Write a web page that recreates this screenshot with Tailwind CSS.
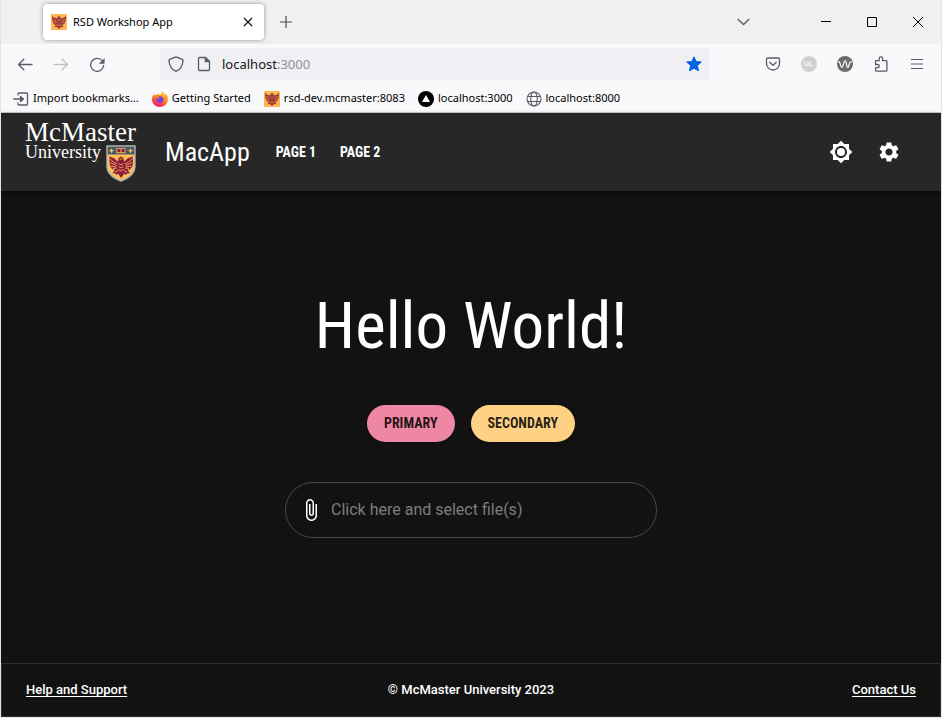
<!DOCTYPE html>
<html lang="en">
<head>
<meta charset="utf-8">
<meta name="viewport" content="width=device-width, initial-scale=1">
<title>RSD Workshop App</title>
<script src="https://cdn.jsdelivr.net/npm/@tailwindcss/browser@4"></script>
</head>
<body class="flex min-h-screen flex-col border-x border-b border-[#e4e4e6] bg-[#121212] font-['Noto_Sans',sans-serif] text-black">
<svg class="hidden" aria-hidden="true">
  <symbol id="eagle" viewBox="0 0 16 16">
    <path fill="#fdb94e" d="M0 0h16v16H0z"/>
    <path fill="#a03a3c" d="M1 2l2.500 1.800L6 4.500l.8-1.800 1.200-.7 1.200.7.800 1.800 2.500-.7L15 2l-.3 4.500-1.200 3.200-2 1.300 1 2.300-2.300-.3L8 15l-2.200-2-2.300.3 1-2.300-2-1.300L1.300 6.500z"/>
    <path stroke="#fdb94e" stroke-width=".5" fill="none" d="M2 5.500l3.200 1.700M2.500 8.200l2.900.6M14 5.500l-3.200 1.700M13.500 8.200l-2.900.6M6.700 5.500l1.300 1 1.300-1M6.200 10.500L8 12l1.800-1.500M4.800 11.500l1.500-.7M11.200 11.500l-1.500-.7"/>
  </symbol>
</svg>

<!-- Tab strip -->
<div class="flex h-11 shrink-0 items-center bg-[#f0f0f0] pl-[42px]">
  <div class="flex h-9 w-[221px] items-center rounded bg-white pl-2 pr-2 shadow-[0_0_4px_rgba(0,0,0,0.4)]">
    <svg class="size-4" aria-hidden="true"><use href="#eagle"/></svg>
    <span class="ml-1.5 flex-1 whitespace-nowrap text-[11px]">RSD Workshop App</span>
    <button class="flex size-4 items-center justify-center" aria-label="Close tab"><svg class="size-[10px]" viewBox="0 0 10 10" fill="none" stroke="#15141a" stroke-width="1.200"><path d="M1 1l8 8M9 1L1 9"/></svg></button>
  </div>
  <button class="ml-4 flex size-3" aria-label="New tab"><svg class="size-3" viewBox="0 0 12 12" fill="none" stroke="#4a4953" stroke-width="1.200"><path d="M6 0v12M0 6h12"/></svg></button>
  <div class="ml-auto flex items-center">
    <button class="mr-[71px]" aria-label="List all tabs"><svg class="h-2 w-[13px]" viewBox="0 0 13 8" fill="none" stroke="#5b5b66" stroke-width="1.400"><path d="M.7 1l5.800 5.600L12.300 1"/></svg></button>
    <button class="mr-9" aria-label="Minimize"><svg class="size-[10px]" viewBox="0 0 10 10" stroke="#000"><path d="M0 4.500h10"/></svg></button>
    <button class="mr-9" aria-label="Maximize"><svg class="size-[10px]" viewBox="0 0 10 10" fill="none" stroke="#000"><path d="M.5.5h9v9h-9z"/></svg></button>
    <button class="mr-[18px]" aria-label="Close"><svg class="size-[10px]" viewBox="0 0 10 10" stroke="#000"><path d="M0 0l10 10M10 0L0 10"/></svg></button>
  </div>
</div>

<!-- Navigation toolbar -->
<div class="flex h-10 shrink-0 items-center bg-[#f9f9fb] pl-4 pr-4 text-[#5b5b66]">
  <button aria-label="Back"><svg class="size-4" viewBox="0 0 16 16" fill="none" stroke="currentColor" stroke-width="1.300" stroke-linecap="round" stroke-linejoin="round"><path d="M15 8.500H1.500M6.800 3.300L1.500 8.500l5.300 5.200"/></svg></button>
  <button class="ml-5 text-[#bebec4]" aria-label="Forward" disabled><svg class="size-4" viewBox="0 0 16 16" fill="none" stroke="currentColor" stroke-width="1.300" stroke-linecap="round" stroke-linejoin="round"><path d="M1 8.500h13.500M9.200 3.300l5.300 5.200-5.300 5.200"/></svg></button>
  <button class="ml-5" aria-label="Reload"><svg class="size-4" viewBox="0 0 16 16" fill="none" stroke="currentColor" stroke-width="1.300" stroke-linecap="round"><path d="M14.700 9.300A6.500 6.500 0 1 1 13.200 4.700"/><path fill="currentColor" stroke="none" d="M15.600 2v5.200c0 .3-.2.500-.5.500H9.900z"/></svg></button>
  <div class="ml-[55px] flex h-8 w-[550px] items-center rounded bg-[#f0f0f4] pl-2 pr-2">
    <svg class="size-4" viewBox="0 0 16 16" fill="none" stroke="currentColor" stroke-width="1.300" stroke-linejoin="round" aria-hidden="true"><path d="M8 .8l6.300 2.500c.5.200.7.600.7 1C14.800 9.800 12.500 13.500 8 15.300 3.500 13.500 1.200 9.800 1 4.300c0-.4.200-.8.700-1z"/></svg>
    <svg class="ml-3 size-4" viewBox="0 0 16 16" fill="none" stroke="currentColor" stroke-width="1.300" stroke-linejoin="round" aria-hidden="true"><path d="M3.500 1.500h6l4 4v8a1 1 0 0 1-1 1h-9a1 1 0 0 1-1-1v-11a1 1 0 0 1 1-1z"/><path fill="currentColor" d="M9.300 1.500v4.200h4.200z"/></svg>
    <span class="ml-2.5 flex-1 pt-0.5 text-[13px] text-[#15141a]">localhost<span class="text-[#8f8f98]">:3000</span></span>
    <button aria-label="Edit bookmark"><svg class="size-4" viewBox="0 0 16 16" fill="#0061e0" stroke="#0061e0" stroke-linejoin="round"><path d="M8 .8l2.100 4.700 5.200.5-3.900 3.500 1.100 5.300L8 12.200l-4.500 2.600 1.100-5.300L.7 6l5.200-.5z"/></svg></button>
  </div>
  <div class="ml-auto flex items-center gap-5">
    <button aria-label="Save to Pocket"><svg class="size-4" viewBox="0 0 16 16" fill="none" stroke="currentColor" stroke-width="1.300" stroke-linecap="round" stroke-linejoin="round"><path d="M2.700 2h10.600c.7 0 1.200.5 1.200 1.200V7.500a6.500 6.500 0 0 1-13 0V3.200C1.500 2.500 2 2 2.700 2z"/><path d="M4.800 6.300L8 9.300l3.200-3"/></svg></button>
    <button aria-label="uBlock"><svg class="size-4" viewBox="0 0 16 16" fill="none" stroke="#f4f4f4" stroke-width="1.300"><circle cx="8" cy="8" r="8" fill="#d0d0d0" stroke="none"/><path d="M4 5.500v2.700c0 2 3 2 3 0V5.500M9 5.500v3.700c0 .4.300.6.700.6H12"/></svg></button>
    <button aria-label="Wave"><svg class="size-4" viewBox="0 0 16 16" fill="none" stroke="#fff" stroke-width="1.200" stroke-linecap="round" stroke-linejoin="round"><circle cx="8" cy="8" r="8" fill="#6b6b6b" stroke="none"/><path d="M1.500 6c1.800-1.300 2 5.500 3.300 5.500S7 4.500 8.200 4.500s1.200 7 2.500 7 1.300-6.500 3.800-5.500"/></svg></button>
    <button aria-label="Extensions"><svg class="size-4" viewBox="0 0 16 16" fill="none" stroke="currentColor" stroke-width="1.300" stroke-linejoin="round"><path d="M2.500 7V4.700h3.700V2.600c0-2.400 3.400-2.400 3.400 0v2.100h3.600c.4 0 .7.300.7.700v9c0 .4-.3.700-.7.700H3.200c-.4 0-.7-.3-.7-.7v-2.700h2.100c2.200 0 2.200-3.200 0-3.200H2.500z"/></svg></button>
    <button aria-label="Open application menu"><svg class="size-4" viewBox="0 0 16 16" fill="none" stroke="currentColor" stroke-width="1.200"><path d="M2 3.500h12M2 8h12M2 12.500h12"/></svg></button>
  </div>
</div>

<!-- Bookmarks bar -->
<nav class="flex h-[29px] shrink-0 items-center gap-[13px] whitespace-nowrap border-b border-[#ccccd0] bg-[#f9f9fb] pl-3 pt-px text-[11px]" aria-label="Bookmarks">
  <a href="#" class="flex items-center gap-1"><svg class="size-4" viewBox="0 0 16 16" fill="none" stroke="#5b5b66" stroke-width="1.300" stroke-linecap="round" stroke-linejoin="round" aria-hidden="true"><path d="M5 4V2.800C5 2.200 5.400 2 6 2h7.500c.6 0 1 .4 1 1v10c0 .6-.4 1-1 1H6c-.6 0-1-.3-1-.8V12M.7 8h8"/><path fill="#5b5b66" d="M7.500 5.500L10.500 8l-3 2.500z"/></svg>Import bookmarks...</a>
  <a href="#" class="flex items-center gap-1"><svg class="size-4" viewBox="0 0 16 16" aria-hidden="true"><defs><linearGradient id="fx" x1=".8" y1="0" x2=".3" y2="1"><stop offset="0" stop-color="#ffe03a"/><stop offset=".45" stop-color="#ff8a1e"/><stop offset="1" stop-color="#f5156c"/></linearGradient></defs><path fill="url(#fx)" d="M10 0c1 1.500 2.500 2 3.700 3.800.8-.2.800-.8.800-.8 1 1.500 1.500 3.200 1.500 5A8 8 0 0 1 8 16C3.500 16 0 12.800 0 8.500c0-2.300.8-4 2-5.500l.5 1.500C3.500 3.700 4 3.500 5 3.500c1-.5 3-.6 4 .5C9.300 2.500 9.300 1.200 10 0z"/><path fill="#7542e5" d="M8 5.200c2 0 3.500 1.500 3.500 3.500S10 12 8 12s-3.500-1.300-3.500-3c0-.7.200-1.300.5-1.700.8.600 1.800.5 2.700 0-.3-.8-1-1-1.700-1.200.6-.6 1.200-.9 2-.9z"/></svg>Getting Started</a>
  <a href="#" class="flex items-center gap-1"><svg class="size-4" aria-hidden="true"><use href="#eagle"/></svg>rsd-dev.mcmaster:8083</a>
  <a href="#" class="flex items-center gap-1"><svg class="size-4" viewBox="0 0 16 16" aria-hidden="true"><circle cx="8" cy="8" r="8"/><path fill="#fff" d="M8 4l4 7H4z"/></svg>localhost:3000</a>
  <a href="#" class="flex items-center gap-1"><svg class="size-4" viewBox="0 0 16 16" fill="none" stroke="#5b5b66" stroke-width="1.100" aria-hidden="true"><circle cx="8" cy="8" r="7"/><ellipse cx="8" cy="8" rx="3.300" ry="7"/><path d="M1.500 5.500h13M1.500 10.500h13"/></svg>localhost:8000</a>
</nav>

<!-- Application bar -->
<header class="relative flex h-[78px] shrink-0 items-center bg-[#272727] px-6 font-['Roboto_Condensed','Liberation_Sans_Narrow',sans-serif] text-white shadow-[0_2px_4px_rgba(0,0,0,0.6)]">
  <a href="#" class="relative h-[60px] w-[111px] font-['Liberation_Serif',serif] whitespace-nowrap" aria-label="McMaster University">
    <span class="block text-[27px] leading-5">McMaster</span>
    <span class="block text-[18px] leading-5">University</span>
    <svg class="absolute right-0 bottom-0 h-[37px] w-[30px]" viewBox="0 0 30 37" aria-hidden="true">
      <path fill="#fdbf57" stroke="#a9b4ba" stroke-width="1.400" d="M1 1h28v20c0 8-6 12-14 15C7 33 1 29 1 21z"/>
      <path fill="#495965" d="M1.700 1.700h26.600V9.500H1.700z"/>
      <path fill="#fdbf57" d="M5.500 3l.8 2 2 .8-2 .8-.8 2-.8-2-2-.8 2-.8zM24.500 3l.8 2 2 .8-2 .8-.8 2-.8-2-2-.8 2-.8zM10.500 3.300h9v5h-9z"/>
      <path fill="#8c1d40" d="M11.300 4h3.200v3.300h-3.200zM15.500 4h3.200v3.300h-3.200z"/>
      <path fill="#8c1d40" d="M3.500 11l2 1.500 2.500.5 2.500 2.500 1.500 1 .5-3.500L15 11.500l2.500 1.500.5 3.500 1.500-1L22 13l2.500-.5 2-1.500.5 6-.5 4-2 3-3 1 2.500 3-2.500.5-2 1.500-1-1.500L15 33l-3-4.500-1 1.500-2-1.500-2.500-.5 2.500-3-3-1-2-3-.5-4z"/>
      <path fill="none" stroke="#fdbf57" stroke-width=".8" d="M4 14l3.500 3 3.500 2M4 17.500l3 1.500 3.500 1.500M4.500 21l5.500 1M26 14l-3.500 3-3.500 2M26 17.500l-3 1.500-3.500 1.500M25.500 21l-5.500 1M7 23.500l4-.5M23 23.500l-4-.5M12.500 18.500l2.500 1.500 2.500-1.500M12.500 21.500l2.500 1.500 2.500-1.500M12.500 24.500l2.500 1.500 2.500-1.500M9 27.500l3.500-2.500M21 27.500L17.500 25M13.500 14h3"/>
    </svg>
  </a>
  <span class="ml-[29px] text-[26px]">MacApp</span>
  <nav class="ml-[26px] flex gap-6 text-[14px] font-bold" aria-label="Pages"><a href="#">PAGE 1</a><a href="#">PAGE 2</a></nav>
  <div class="ml-auto flex gap-6 pr-4">
    <button aria-label="Toggle theme"><svg class="size-6" viewBox="0 0 24 24" fill="currentColor"><path d="M20 15.310L23.310 12 20 8.690V4h-4.690L12 .69 8.690 4H4v4.690L.69 12 4 15.310V20h4.690L12 23.310 15.310 20H20v-4.690zM12 18c-3.310 0-6-2.690-6-6s2.690-6 6-6 6 2.690 6 6-2.690 6-6 6z"/><circle cx="12" cy="12" r="4"/></svg></button>
    <button aria-label="Settings"><svg class="size-6" viewBox="0 0 24 24" fill="currentColor"><path d="M19.140 12.940c.04-.3.060-.61.060-.94 0-.32-.02-.64-.07-.94l2.030-1.580c.18-.14.230-.41.120-.61l-1.920-3.320c-.12-.22-.37-.29-.59-.22l-2.390.96c-.5-.38-1.030-.7-1.620-.94l-.36-2.540c-.04-.24-.24-.41-.48-.41h-3.840c-.24 0-.43.170-.47.410l-.36 2.540c-.59.240-1.130.570-1.620.940l-2.390-.96c-.22-.08-.47 0-.59.220L2.740 8.870c-.12.210-.08.470.120.610l2.030 1.580c-.05.300-.09.630-.09.940s.02.640.07.940l-2.030 1.580c-.18.140-.23.410-.12.610l1.920 3.320c.12.220.37.290.59.220l2.390-.96c.5.380 1.030.7 1.620.94l.36 2.540c.05.240.24.410.48.410h3.840c.24 0 .44-.17.470-.41l.36-2.540c.59-.24 1.130-.56 1.620-.94l2.390.96c.22.080.47 0 .59-.22l1.920-3.320c.12-.22.070-.47-.12-.61l-2.010-1.580zM12 15.600c-1.980 0-3.600-1.620-3.600-3.600s1.620-3.600 3.600-3.600 3.600 1.620 3.600 3.600-1.620 3.600-3.600 3.600z"/></svg></button>
  </div>
</header>

<main class="flex flex-1 flex-col items-center pt-24 font-['Roboto_Condensed','Liberation_Sans_Narrow',sans-serif]">
  <h1 class="text-[65px] leading-[78px] text-white">Hello World!</h1>
  <div class="mt-10 flex gap-4 text-[14px] font-bold">
    <button class="h-[37px] rounded-full bg-[#ed87a3] px-[17px] text-black/85 shadow">PRIMARY</button>
    <button class="h-[37px] rounded-full bg-[#ffd185] px-[17px] text-black/85 shadow">SECONDARY</button>
  </div>
  <label class="mt-10 flex h-14 w-[372px] items-center rounded-full border border-[#494949] pl-[13px] pr-5 font-['Roboto',sans-serif]">
    <svg class="size-6 text-white" viewBox="0 0 24 24" fill="currentColor" aria-hidden="true"><path d="M16.500 6v11.500c0 2.210-1.790 4-4 4s-4-1.790-4-4V5c0-1.380 1.120-2.500 2.500-2.500s2.500 1.120 2.500 2.500v10.500c0 .55-.45 1-1 1s-1-.45-1-1V6H10v9.500c0 1.380 1.120 2.500 2.500 2.500s2.500-1.120 2.500-2.500V5c0-2.210-1.790-4-4-4S7 2.790 7 5v12.500c0 3.040 2.460 5.500 5.500 5.500s5.500-2.460 5.500-5.500V6h-1.500z"/></svg>
    <input class="ml-2 min-w-0 flex-1 bg-transparent text-base text-white outline-none placeholder:text-[#7d7d7d]" type="text" readonly placeholder="Click here and select file(s)" aria-label="Select files">
  </label>
</main>

<footer class="grid h-[54px] shrink-0 grid-cols-3 items-center border border-[#303030] px-6 font-['Roboto',sans-serif] text-[13px] font-medium text-white">
  <a href="#" class="justify-self-start underline underline-offset-2">Help and Support</a>
  <span class="justify-self-center">© McMaster University 2023</span>
  <a href="#" class="justify-self-end underline underline-offset-2">Contact Us</a>
</footer>
</body>
</html>
